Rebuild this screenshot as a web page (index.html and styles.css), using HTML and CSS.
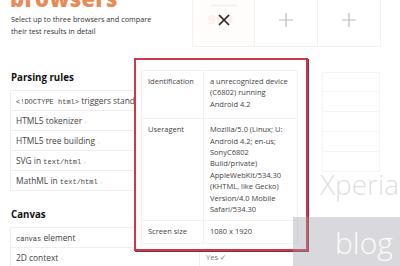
FILE: index.html
```html
<!DOCTYPE html>
<html>
<head>
<meta charset="utf-8">
<link rel="stylesheet" href="styles.css">
</head>
<body>
<div class="page">
  <header class="top">
    <div class="intro">
      <h1 class="title">browsers</h1>
      <p class="lead">Select up to three browsers and compare<br>their test results in detail</p>
    </div>
    <div class="slots">
      <div class="slot slot-active">
        <span class="ghost-bar"></span>
        <span class="ghost-logo">999</span>
        <svg class="icon-x" viewBox="0 0 12 12" width="12" height="12"><path d="M1 1L11 11M11 1L1 11" stroke="#222" stroke-width="1.6" fill="none"/></svg>
      </div>
      <div class="slot">
        <svg class="icon-plus" viewBox="0 0 14 14" width="14" height="14"><path d="M7 0V14M0 7H14" stroke="#bbb" stroke-width="1.2" fill="none"/></svg>
      </div>
      <div class="slot">
        <svg class="icon-plus" viewBox="0 0 14 14" width="14" height="14"><path d="M7 0V14M0 7H14" stroke="#bbb" stroke-width="1.2" fill="none"/></svg>
      </div>
    </div>
  </header>

  <section class="results">
    <div class="col-left">
      <h2 class="group">Parsing rules</h2>
      <ul class="rows">
        <li class="row"><code>&lt;!DOCTYPE html&gt;</code> triggers standards mode</li>
        <li class="row">HTML5 tokenizer <span class="mark">»</span></li>
        <li class="row">HTML5 tree building <span class="mark">»</span></li>
        <li class="row">SVG in <code>text/html</code> <span class="mark">»</span></li>
        <li class="row">MathML in <code>text/html</code> <span class="mark">»</span></li>
      </ul>
      <h2 class="group group-next">Canvas</h2>
      <ul class="rows">
        <li class="row"><code>canvas</code> element <span class="mark">»</span></li>
        <li class="row">2D context <span class="mark">»</span></li>
      </ul>
    </div>
    <div class="col-mid">
      <span class="peek">Yes ✓</span>
    </div>
    <div class="col-right">
      <div class="cell"></div>
      <div class="cell"></div>
      <div class="cell"></div>
      <div class="cell"></div>
      <div class="cell"></div>
    </div>
  </section>

  <div class="popup">
    <table class="info">
      <tr class="first">
        <th>Identification</th>
        <td>a unrecognized device<br>(C6802) running<br>Android 4.2</td>
      </tr>
      <tr>
        <th>Useragent</th>
        <td>Mozilla/5.0 (Linux; U:<br>Android 4.2; en-us;<br>SonyC6802<br>Build/private)<br>AppleWebKit/534.30<br>(KHTML, like Gecko)<br>Version/4.0 Mobile<br>Safari/534.30</td>
      </tr>
      <tr>
        <th>Screen size</th>
        <td>1080 x 1920</td>
      </tr>
    </table>
  </div>

  <div class="wm-xperia">Xperia</div>
  <div class="wm-band"><span class="wm-blog">blog</span></div>
</div>
</body>
</html>
```

FILE: styles.css
```css
html, body {
  margin: 0;
  padding: 0;
  background: #fff;
}
body {
  width: 400px;
  height: 266px;
  overflow: hidden;
  font-family: "Open Sans", "DejaVu Sans", sans-serif;
  color: #444;
}
.page {
  position: relative;
  width: 400px;
  height: 266px;
  overflow: hidden;
}
.top {
  display: flex;
  height: 47px;
  padding-left: 10px;
}
.intro {
  width: 181px;
}
.title {
  margin: -13px 0 0 0;
  font-size: 22px;
  line-height: 22px;
  font-weight: 800;
  color: #e98a55;
  letter-spacing: 0.3px;
}
.lead {
  margin: 4px 0 0 1px;
  font-size: 7.3px;
  line-height: 12px;
  color: #333;
  white-space: nowrap;
}
.slots {
  display: flex;
  margin-top: -10px;
  margin-left: 1px;
  height: 57px;
}
.slot {
  width: 63px;
  border: 1px solid #f1f1f1;
  border-left-width: 0;
  display: flex;
  align-items: center;
  justify-content: center;
  padding-top: 3px;
  box-sizing: border-box;
  position: relative;
}
.slot:first-child {
  border-left-width: 1px;
}
.slot-active {
  background: #fffdfc;
}
.ghost-bar {
  position: absolute;
  left: 18px;
  top: 13px;
  width: 26px;
  height: 3px;
  background: #f5f5f5;
}
.ghost-logo {
  position: absolute;
  left: 15px;
  top: 20px;
  font-size: 13px;
  line-height: 16px;
  font-weight: 800;
  color: #fdeee7;
  letter-spacing: 1px;
}
.icon-x, .icon-plus {
  position: relative;
}
.results {
  display: flex;
  padding-left: 10px;
  margin-top: 23px;
}
.col-left {
  width: 190px;
}
.group {
  margin: 0 0 0 1px;
  font-size: 9.7px;
  line-height: 16px;
  font-weight: 700;
  color: #111;
}
.group-next {
  margin-top: 16px;
}
.rows {
  list-style: none;
  margin: 4px 0 0 0;
  padding: 0;
  border-top: 1px solid #eee;
}
.row {
  height: 20px;
  box-sizing: border-box;
  border: 1px solid #eee;
  border-top: 0;
  padding-left: 5px;
  font-size: 8.4px;
  line-height: 19px;
  color: #444;
  white-space: nowrap;
  overflow: hidden;
}
.row code {
  font-family: "Liberation Mono", "DejaVu Sans Mono", monospace;
  font-size: 7px;
}
.mark {
  color: #ddd;
  font-size: 6px;
}
.col-mid {
  width: 122px;
  display: flex;
  align-items: flex-end;
  padding-left: 6px;
  box-sizing: border-box;
}
.peek {
  font-size: 7.5px;
  color: #777;
  line-height: 10px;
  margin-bottom: 6px;
}
.col-right {
  width: 58px;
  margin-top: 2px;
}
.cell {
  height: 20px;
  border: 1px solid #f5f5f5;
  border-top: 0;
  box-sizing: border-box;
}
.cell:first-child {
  border-top: 1px solid #f5f5f5;
}
.popup {
  position: absolute;
  left: 134px;
  top: 58px;
  width: 174px;
  height: 193px;
  box-sizing: border-box;
  border: 2px solid #c9394e;
  background: #fff;
  padding: 10px 8px 0 5px;
  box-shadow: 1px 1px 0 #8e2a3a;
}
.info {
  border-collapse: collapse;
  width: 157px;
  font-size: 7.5px;
  line-height: 11.4px;
  color: #444;
}
.info th, .info td {
  text-align: left;
  vertical-align: top;
  font-weight: 400;
  padding: 5px 6px;
  border: 1px solid #f1f1f1;
  white-space: nowrap;
}
.info .first th, .info .first td {
  padding-bottom: 8px;
}
.info th {
  width: 49px;
}
.wm-xperia {
  position: absolute;
  left: 320px;
  top: 169px;
  font-size: 28px;
  line-height: 30px;
  color: rgba(170, 170, 178, 0.4);
  font-family: "Open Sans", "DejaVu Sans", sans-serif;
  font-weight: 300;
}
.wm-band {
  position: absolute;
  left: 293px;
  top: 217px;
  width: 107px;
  height: 49px;
  background: rgba(160, 160, 170, 0.4);
}
.wm-blog {
  position: absolute;
  left: 42px;
  top: 11px;
  font-size: 30px;
  line-height: 30px;
  color: rgba(255, 255, 255, 0.92);
  font-family: "Open Sans", "DejaVu Sans", sans-serif;
  font-weight: 300;
}
```
